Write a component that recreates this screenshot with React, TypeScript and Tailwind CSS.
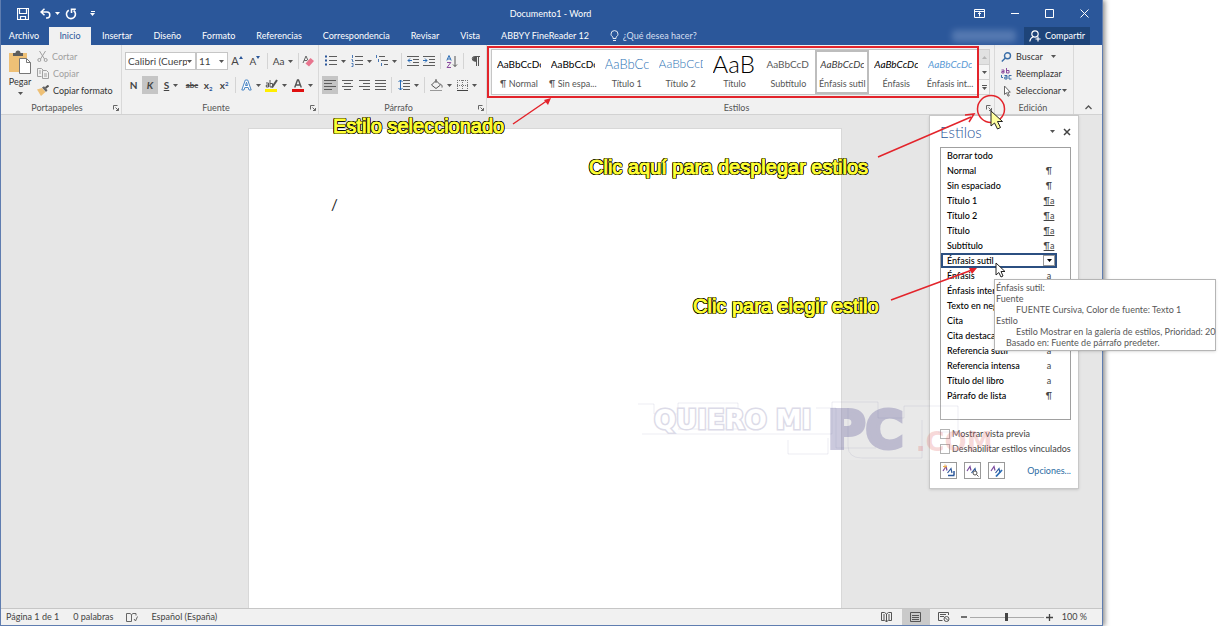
import { useState } from 'react';
import type { ReactNode } from 'react';
import clsx from 'clsx';

const TABS = ['Insertar', 'Diseño', 'Formato', 'Referencias', 'Correspondencia', 'Revisar', 'Vista', 'ABBYY FineReader 12'];

const GALLERY = [
  { name: '¶ Normal', sample: 'AaBbCcDc', look: 'text-[10px] text-black' },
  { name: '¶ Sin espa...', sample: 'AaBbCcDc', look: 'text-[10px] text-black' },
  { name: 'Título 1', sample: 'AaBbCc', look: 'text-[13px] font-light text-[#2e74b5]' },
  { name: 'Título 2', sample: 'AaBbCcD', look: 'text-[12px] font-light text-[#2e74b5]' },
  { name: 'Título', sample: 'AaB', look: 'text-[24px] font-light text-black' },
  { name: 'Subtítulo', sample: 'AaBbCcD', look: 'text-[10px] text-[#5a5a5a]' },
  { name: 'Énfasis sutil', sample: 'AaBbCcDc', look: 'text-[10px] italic text-[#404040]', active: true },
  { name: 'Énfasis', sample: 'AaBbCcDc', look: 'text-[10px] italic text-black' },
  { name: 'Énfasis int...', sample: 'AaBbCcDc', look: 'text-[10px] italic text-[#5b9bd5]' },
];

const STYLES = [
  ['Borrar todo', ''],
  ['Normal', '¶'],
  ['Sin espaciado', '¶'],
  ['Título 1', '¶a'],
  ['Título 2', '¶a'],
  ['Título', '¶a'],
  ['Subtítulo', '¶a'],
  ['Énfasis sutil', 'a'],
  ['Énfasis', 'a'],
  ['Énfasis inter', ''],
  ['Texto en neg', ''],
  ['Cita', ''],
  ['Cita destaca', ''],
  ['Referencia sutil', 'a'],
  ['Referencia intensa', 'a'],
  ['Título del libro', 'a'],
  ['Párrafo de lista', '¶'],
];

const Caret = ({ className = 'text-[#555]' }: { className?: string }) => (
  <svg width="5" height="3" viewBox="0 0 5 3" className={clsx('shrink-0', className)}>
    <path d="M0 0h5L2.5 3z" fill="currentColor" />
  </svg>
);

const Sep = () => <span className="mx-[3px] h-4 w-px shrink-0 bg-[#d4d4d4]" />;

function Tool({ label, children, className = 'w-4', active = false, caret = false }: {
  label: string;
  children: ReactNode;
  className?: string;
  active?: boolean;
  caret?: boolean;
}) {
  return (
    <button
      type="button"
      aria-label={label}
      className={clsx('flex h-[18px] shrink-0 items-center justify-center gap-1 text-[#444]', active && 'bg-[#c5c5c5]', className)}
    >
      {children}
      {caret && <Caret />}
    </button>
  );
}

// Horizontal rules given as [x1, x2, y]
const Lines = ({ rows, w = 12, h = 12, children }: { rows: number[][]; w?: number; h?: number; children?: ReactNode }) => (
  <svg width={w} height={h} viewBox={`0 0 ${w} ${h}`} fill="none" className="shrink-0">
    {rows.map(([a, b, y], i) => (
      <path key={i} d={`M${a} ${y + 0.5}H${b}`} stroke="#5c5c5c" />
    ))}
    {children}
  </svg>
);

const Launcher = ({ label }: { label: string }) => (
  <button type="button" aria-label={label} className="text-[#666]">
    <svg width="6" height="6" viewBox="0 0 6 6" fill="none" stroke="currentColor">
      <path d="M.5 4.5v-4h4M2.5 2.5l3 3M5.5 3v2.5H3" />
    </svg>
  </button>
);

function Group({ title, className, launcher = true, children }: { title: string; className: string; launcher?: boolean; children: ReactNode }) {
  return (
    <section className={clsx('flex flex-col border-r border-[#d9d9d9]', className)}>
      <div className="h-[57px]">{children}</div>
      <div className="flex h-3 items-center pr-[2px]">
        <h2 className="flex-1 text-center text-[#555]">{title}</h2>
        {launcher && <Launcher label={`Opciones de ${title}`} />}
      </div>
    </section>
  );
}

function TitleBar() {
  return (
    <header className="flex h-[27px] items-center bg-[#2b579a] pr-[13px] pl-4 text-white">
      <div className="flex w-[106px] items-center">
        <button type="button" aria-label="Guardar">
          <svg width="12" height="12" viewBox="0 0 12 12" fill="none" stroke="currentColor">
            <path d="M.5.5h11v11H.5zM2.5.5v5h7v-5M3.5 11V8.500h5V11" strokeWidth="1.2" />
          </svg>
        </button>
        <button type="button" aria-label="Deshacer" className="ml-[11px] flex items-center gap-1">
          <svg width="11" height="11" viewBox="0 0 11 11" fill="none" stroke="currentColor" strokeWidth="1.5">
            <path d="M1 4h6a2.800 3 0 0 1 0 6H6M4.500.7 1 4l3.500 3.300" />
          </svg>
          <Caret className="text-white" />
        </button>
        <button type="button" aria-label="Rehacer" className="ml-[5px]">
          <svg width="12" height="12" viewBox="0 0 12 12" fill="none" stroke="currentColor" strokeWidth="1.6">
            <path d="M3.800 2.200a4.500 4.500 0 1 0 4.800.3M6.500 5V1.300h4.300" />
          </svg>
        </button>
        <button type="button" aria-label="Personalizar barra" className="ml-[13px] flex flex-col items-center gap-px">
          <span className="h-px w-1 bg-white" />
          <Caret className="text-white" />
        </button>
      </div>
      <h1 className="flex-1 pl-1 text-center text-[9px]">Documento1 - Word</h1>
      <div className="flex items-center gap-[26px]">
        <button type="button" aria-label="Opciones de presentación">
          <svg width="11" height="9" viewBox="0 0 11 9" fill="none" stroke="currentColor">
            <path d="M.5.5h10v8H.5zM.5 2.500h10M5.500 7.500v-4M4 5l1.500-1.500L7 5" />
          </svg>
        </button>
        <button type="button" aria-label="Minimizar">
          <svg width="8" height="9" viewBox="0 0 8 9"><path d="M0 4.500h8" stroke="currentColor" /></svg>
        </button>
        <button type="button" aria-label="Maximizar">
          <svg width="9" height="9" viewBox="0 0 9 9"><path d="M.5.5h8v8h-8z" fill="none" stroke="currentColor" /></svg>
        </button>
        <button type="button" aria-label="Cerrar">
          <svg width="9" height="9" viewBox="0 0 9 9"><path d="M.5.5l8 8M8.500.5l-8 8" stroke="currentColor" /></svg>
        </button>
      </div>
    </header>
  );
}

function TabBar() {
  return (
    <nav className="flex h-[18px] bg-[#2b579a] pr-3 text-[9px] text-white">
      <button type="button" className="w-12 pr-[2px]">Archivo</button>
      <button type="button" className="w-[42px] bg-[#f1f1f1] text-[#2b579a]">Inicio</button>
      {TABS.map((tab) => (
        <button key={tab} type="button" className="pr-[10px] pl-[11px] whitespace-nowrap">{tab}</button>
      ))}
      <label className="flex flex-1 items-center gap-1 pl-[11px]">
        <svg width="9" height="12" viewBox="0 0 9 12" fill="none" stroke="#e6ecf5">
          <path d="M3 8.500V7.200C1.600 6.200 1 5.300 1 4.100a3.500 3.500 0 0 1 7 0c0 1.200-.6 2.100-2 3.100v1.300zM3 10.500h3" />
        </svg>
        <input aria-label="¿Qué desea hacer?" placeholder="¿Qué desea hacer?" className="w-24 bg-transparent outline-none placeholder:text-[#d5dff0]" />
      </label>
      <span aria-hidden="true" className="mr-2 h-3 w-16 self-center rounded bg-[#7f9bc8] opacity-50 blur-[3px]" />
      <button type="button" className="flex w-[66px] items-center justify-center gap-1 bg-[#1e4479]">
        <svg width="12" height="12" viewBox="0 0 12 12" fill="none" stroke="currentColor" strokeWidth="1.200">
          <circle cx="6" cy="4" r="3.200" />
          <path d="M.8 11.500c.3-2.500 1.700-4 3.500-4.700M9 6.500v5M6.500 9h5" />
        </svg>
        Compartir
      </button>
    </nav>
  );
}

function Clipboard() {
  return (
    <Group title="Portapapeles" className="w-[121px]">
      <div className="flex gap-1 pt-[3px] pl-[6px]">
        <button type="button" className="flex w-[26px] flex-col items-center pt-[2px] text-[#333]">
          <svg width="24" height="24" viewBox="0 0 24 24" className="shrink-0">
            <path d="M1 3h18v19H1z" fill="#eec076" />
            <path d="M5 3h2.500a2.500 2.500 0 0 1 5 0H15v3H5z" fill="#5d5d5d" />
            <path d="M11.500 8.500h7l4 4v11h-11z" fill="#fff" stroke="#777" />
            <path d="M18.500 8.500v4h4" fill="none" stroke="#777" />
          </svg>
          <span className="pt-[2px] pb-1">Pegar</span>
          <Caret />
        </button>
        <div className="flex flex-col text-[#333]">
          <button type="button" className="flex h-[17px] items-center gap-1 text-[#a0a0a0]">
            <svg width="11" height="11" viewBox="0 0 11 11" fill="none" stroke="currentColor">
              <path d="M2.500 0l5 8M8.500 0l-5 8" />
              <circle cx="2.300" cy="9" r="1.500" />
              <circle cx="8.700" cy="9" r="1.500" />
            </svg>
            Cortar
          </button>
          <button type="button" className="flex h-[17px] items-center gap-1 text-[#a0a0a0]">
            <svg width="12" height="11" viewBox="0 0 12 11" fill="none" stroke="currentColor">
              <path d="M4.500 8.500h-4v-8h4l2 2M5.500 2.500h4l2 2v6h-6zM2 3h2M2 5h2M7 6h3M7 8h3" />
            </svg>
            Copiar
          </button>
          <button type="button" className="flex h-[17px] items-center gap-1 whitespace-nowrap">
            <svg width="12" height="11" viewBox="0 0 12 11">
              <path d="M0 4.500 5 3l3.500 4L4 11z" fill="#eec076" />
              <path d="M5 2.500l2-1.300 3.500 4L9 7z" fill="#666" />
              <path d="M8.500 3 11.500.5" stroke="#555" strokeWidth="2" />
            </svg>
            Copiar formato
          </button>
        </div>
      </div>
    </Group>
  );
}

function FontGroup() {
  const [font, setFont] = useState('Calibri (Cuerpo)');
  const [size, setSize] = useState('11');
  const box = 'h-[18px] w-full appearance-none border border-[#c6c6c6] bg-white pl-[2px] text-[10px] leading-none text-[#444]';
  return (
    <Group title="Fuente" className="w-[197px]">
      <div className="flex flex-col gap-[6px] pt-[7px] pl-[3px]">
        <div className="flex items-center">
          <div className="relative w-[71px]">
            <select aria-label="Fuente" value={font} onChange={(e) => setFont(e.target.value)} className={clsx(box, 'pr-2')}>
              <option>Calibri (Cuerpo)</option>
              <option>Arial</option>
            </select>
            <span className="pointer-events-none absolute inset-y-0 right-1 flex items-center"><Caret /></span>
          </div>
          <div className="relative w-8">
            <select aria-label="Tamaño de fuente" value={size} onChange={(e) => setSize(e.target.value)} className={box}>
              <option>11</option>
              <option>12</option>
            </select>
            <span className="pointer-events-none absolute inset-y-0 right-1 flex items-center"><Caret /></span>
          </div>
          <Tool label="Aumentar tamaño" className="w-[18px] text-[11px]">
            <span>A</span>
            <svg width="4" height="10" viewBox="0 0 4 10" className="-ml-1"><path d="M0 3 2 0l2 3z" fill="#2b579a" /></svg>
          </Tool>
          <Tool label="Reducir tamaño" className="w-[18px] text-[10px]">
            <span>A</span>
            <svg width="4" height="10" viewBox="0 0 4 10" className="-ml-1"><path d="M0 0 2 3l2-3z" fill="#2b579a" /></svg>
          </Tool>
          <Sep />
          <Tool label="Cambiar mayúsculas" caret className="w-6 text-[10px]">Aa</Tool>
          <Sep />
          <Tool label="Borrar formato" className="w-3">
            <svg width="12" height="12" viewBox="0 0 12 12" fill="none">
              <path d="M1 8 4 1l2 4.500M2 5.500h3" stroke="#666" />
              <path d="M3.500 8.500 8.500 3 12 6l-5 5.500z" fill="#e8758e" />
            </svg>
          </Tool>
        </div>
        <div className="flex items-center">
          <Tool label="Negrita" className="w-[17px] text-[10px] font-bold">N</Tool>
          <Tool label="Cursiva" active className="w-4 text-[10px] font-bold italic">K</Tool>
          <Tool label="Subrayado" caret className="w-[26px] text-[10px] font-bold"><span className="underline">S</span></Tool>
          <Tool label="Tachado" className="w-4 text-[8px] font-bold"><span className="line-through">abc</span></Tool>
          <Tool label="Subíndice" className="w-4 text-[10px] font-bold"><span>x<sub className="text-[6px] text-[#2b579a]">2</sub></span></Tool>
          <Tool label="Superíndice" className="w-4 text-[10px] font-bold"><span>x<sup className="text-[6px] text-[#2b579a]">2</sup></span></Tool>
          <Sep />
          <Tool label="Efectos de texto" caret className="w-6">
            <svg width="11" height="12" viewBox="0 0 11 12" fill="#fff" stroke="#4a86c5">
              <path d="M.8 11 4.300 1h2.400l3.500 10H8L7.200 8.500H3.800L3 11zM4.500 6.500h2l-1-3.300z" />
            </svg>
          </Tool>
          <Tool label="Color de resaltado" caret className="w-[26px]">
            <svg width="13" height="13" viewBox="0 0 13 13">
              <path d="M0 10h12v3H0z" fill="#ffee00" />
              <path d="M7 8.500 12 1" stroke="#555" strokeWidth="2" />
              <path d="M1 4h2.500v4H1.300V6h2M5 1v7h2.500V4.500H5" fill="none" stroke="#555" />
            </svg>
          </Tool>
          <Tool label="Color de fuente" caret className="w-[26px]">
            <svg width="12" height="13" viewBox="0 0 12 13" fill="none">
              <path d="M0 10h12v3H0z" fill="#e01010" />
              <path d="M2.700 8.500 5.500 1h1l2.800 7.500M3.700 6h4.600" stroke="#555" strokeWidth="1.400" />
            </svg>
          </Tool>
        </div>
      </div>
    </Group>
  );
}

function ParagraphGroup() {
  return (
    <Group title="Párrafo" className="w-[168px]">
      <div className="flex flex-col gap-[6px] pt-[7px] pl-[3px]">
        <div className="flex items-center">
          <Tool label="Viñetas" caret className="w-[26px]">
            <Lines rows={[[4, 12, 1], [4, 12, 5], [4, 12, 9]]}><path d="M0 1.500h2M0 5.500h2M0 9.500h2" stroke="#2b579a" strokeWidth="2" /></Lines>
          </Tool>
          <Tool label="Numeración" caret className="w-[26px]">
            <Lines rows={[[4, 12, 1], [4, 12, 5], [4, 12, 9]]}><path d="M1.500 0v3M.5 4.500h1v2h1M.5 8.500h1.500v3H.5" stroke="#4a78b5" /></Lines>
          </Tool>
          <Tool label="Lista multinivel" caret className="w-6">
            <Lines rows={[[3, 9, 1], [5, 12, 5], [8, 12, 9]]}><path d="M.5 0v3M2.500 4v3M5.500 8v3" stroke="#4a78b5" /></Lines>
          </Tool>
          <Sep />
          <Tool label="Disminuir sangría">
            <Lines rows={[[0, 12, 1], [6, 12, 4], [6, 12, 7], [0, 12, 10]]}><path d="M5 5.500H1M3 3.500l-2 2 2 2" stroke="#2b6cb5" /></Lines>
          </Tool>
          <Tool label="Aumentar sangría">
            <Lines rows={[[0, 12, 1], [6, 12, 4], [6, 12, 7], [0, 12, 10]]}><path d="M0 5.500h4M2 3.500l2 2-2 2" stroke="#2b6cb5" /></Lines>
          </Tool>
          <Sep />
          <Tool label="Ordenar">
            <svg width="12" height="13" viewBox="0 0 12 13" fill="none">
              <path d="M.8 5.500 3 .5l2.200 5M1.500 4h3" stroke="#2b6cb5" />
              <path d="M1 7.500h3.800L1 12.500h4" stroke="#8a4a9e" />
              <path d="M9 1v10.500M7 9.500l2 2 2-2" stroke="#555" />
            </svg>
          </Tool>
          <Sep />
          <Tool label="Mostrar todo">
            <svg width="9" height="10" viewBox="0 0 9 10" fill="none" stroke="#555">
              <path d="M9 .5H3.500a2 2 0 0 0 0 4.500H5M5.500.5V10M7.500.5V10" /><path d="M3 1h2v4H3.500L2 3z" fill="#555" />
            </svg>
          </Tool>
        </div>
        <div className="flex items-center">
          <Tool label="Alinear a la izquierda" active><Lines rows={[[0, 12, 1], [0, 8, 4], [0, 12, 7], [0, 8, 10]]} /></Tool>
          <Tool label="Centrar" className="w-[18px]"><Lines w={11} rows={[[0, 11, 1], [2, 9, 4], [0, 11, 7], [2, 9, 10]]} /></Tool>
          <Tool label="Alinear a la derecha"><Lines w={11} rows={[[0, 11, 1], [4, 11, 4], [0, 11, 7], [4, 11, 10]]} /></Tool>
          <Tool label="Justificar"><Lines w={11} rows={[[0, 11, 1], [0, 11, 4], [0, 11, 7], [0, 11, 10]]} /></Tool>
          <Sep />
          <Tool label="Interlineado" caret className="w-[26px]">
            <Lines rows={[[5, 12, 1], [5, 12, 4], [5, 12, 7], [5, 12, 10]]}><path d="M2.500 1v10M.5 3l2-2 2 2M.5 9l2 2 2-2" stroke="#2b6cb5" /></Lines>
          </Tool>
          <Sep />
          <Tool label="Sombreado" caret className="w-[26px]">
            <svg width="13" height="12" viewBox="0 0 13 12" fill="none" stroke="#555">
              <path d="M1.500 6 6 1.500 10.500 6 6 9.500zM6 4V0M10.500 5c1.500 1 1.800 2 1.500 3.500" />
              <path d="M0 11.500h12" stroke="#999" />
            </svg>
          </Tool>
          <Tool label="Bordes" caret className="w-[26px]">
            <svg width="11" height="11" viewBox="0 0 11 11" fill="none" stroke="#777">
              <path d="M0 .5h11M.5 0v11M5.500 0v11M10.500 0v11M0 5.500h11" strokeDasharray="1 1" /><path d="M0 10.500h11" stroke="#444" />
            </svg>
          </Tool>
        </div>
      </div>
    </Group>
  );
}

function StylesGroup() {
  return (
    <Group title="Estilos" className="min-w-0 flex-1">
      <div className="flex pt-1 pl-1">
        <div className="relative flex h-[46px] flex-1 border border-[#c6c6c6] bg-white">
          {GALLERY.map((style) => (
            <button
              key={style.name}
              type="button"
              className={clsx(
                'flex min-w-0 flex-1 flex-col items-center overflow-hidden border-2 pt-px text-[#555]',
                style.active ? 'border-[#bdbdbd]' : 'border-transparent',
              )}
            >
              <span className={clsx('flex h-[22px] w-11 shrink-0 items-center overflow-hidden whitespace-nowrap', style.look)}>{style.sample}</span>
              <span className="pt-[3px] whitespace-nowrap">{style.name}</span>
            </button>
          ))}
          {/* highlight around the whole gallery */}
          <span className="pointer-events-none absolute -inset-y-1 -right-[2px] -left-[5px] z-10 border-2 border-[#e3242b]" />
        </div>
        <div className="mr-1 flex w-3 flex-col border border-[#d0d0d0] bg-[#f6f6f6]">
          <button type="button" aria-label="Fila anterior" className="flex flex-1 items-center justify-center bg-[#e1e1e1]"><Caret className="rotate-180 text-[#b5b5b5]" /></button>
          <button type="button" aria-label="Fila siguiente" className="flex flex-1 items-center justify-center border-y border-[#d0d0d0]"><Caret /></button>
          <button type="button" aria-label="Más estilos" className="flex flex-1 flex-col items-center justify-center gap-px">
            <span className="h-px w-[5px] bg-[#555]" />
            <Caret />
          </button>
        </div>
      </div>
    </Group>
  );
}

function EditGroup() {
  return (
    <Group title="Edición" className="w-[79px]" launcher={false}>
      <div className="flex flex-col items-start pt-[3px] pl-[6px] text-[#333]">
        <button type="button" className="flex h-[17px] items-center gap-1">
          <svg width="11" height="10" viewBox="0 0 11 10" fill="none" stroke="#3a6ea8" strokeWidth="1.400">
            <circle cx="6.500" cy="3.800" r="3" /><path d="M4.300 6 .8 9.500" />
          </svg>
          Buscar
          <span className="pl-1"><Caret /></span>
        </button>
        <button type="button" className="flex h-[17px] items-center gap-1">
          <svg width="11" height="12" viewBox="0 0 11 12" fill="none">
            <path d="M.5 2h2.500v3H.8V3.500H3M5.500 0v5H8V2.500H5.500" stroke="#8a4a9e" />
            <path d="M3.500 7.500H6v3.500H3.800V9H6M10.500 7.500H8V11h2.500M.5 7v2.500h1.500" stroke="#3a6ea8" />
          </svg>
          Reemplazar
        </button>
        <button type="button" className="flex h-[17px] items-center gap-1 whitespace-nowrap">
          <svg width="11" height="12" viewBox="0 0 11 12" fill="#fff" stroke="#666">
            <path d="M3.500 1v8.500l2-1.800 1.500 3.500 1.300-.6L6.800 7.200h2.500z" />
          </svg>
          <span className="flex items-center gap-px">Seleccionar <Caret /></span>
        </button>
      </div>
    </Group>
  );
}

const PaneIcon = ({ label, children }: { label: string; children?: ReactNode }) => (
  <button type="button" aria-label={label} className="flex size-[17px] items-center justify-center border border-[#999] bg-white">
    <svg width="13" height="13" viewBox="0 0 13 13" fill="none">
      <path d="M1 7 4 2.500l1 4" stroke="#7a4a9e" strokeWidth="1.200" />
      <path d="M5.500 9 9 4.500 10 9" stroke="#2b579a" strokeWidth="1.200" />
      {children}
    </svg>
  </button>
);

function StylesPane() {
  const [selected, setSelected] = useState('Énfasis sutil');
  const [preview, setPreview] = useState(false);
  const [linked, setLinked] = useState(false);
  const tick = 'size-[10px] shrink-0 appearance-none border border-[#a6a6a6] bg-white checked:bg-[#2b579a]';
  return (
    <aside className="absolute top-0 right-[23px] flex w-[150px] flex-col border border-[#c8c8c8] bg-white pr-[7px] pb-[9px] pl-[10px] shadow-sm">
      <div className="flex h-[31px] items-center gap-2">
        <h2 className="flex-1 text-[15px] font-light text-[#2b579a]">Estilos</h2>
        <button type="button" aria-label="Opciones del panel"><Caret /></button>
        <button type="button" aria-label="Cerrar panel">
          <svg width="8" height="8" viewBox="0 0 8 8"><path d="M1 1l6 6M7 1 1 7" stroke="#444" strokeWidth="1.500" /></svg>
        </button>
      </div>
      <ul className="h-[273px] border border-[#a0a0a0] pr-[13px] font-medium text-black">
        {STYLES.map(([name, mark]) => (
          <li key={name}>
            <button
              type="button"
              onClick={() => setSelected(name)}
              className={clsx('flex h-[15px] w-full items-center border-2 pl-1 text-left', selected === name ? 'border-[#2b4f81]' : 'border-transparent')}
            >
              <span className="flex-1 whitespace-nowrap">{name}</span>
              {selected === name ? (
                <span className="flex h-[11px] w-3 items-center justify-center border border-[#999]"><Caret className="text-black" /></span>
              ) : (
                <span className={clsx('w-3 text-center font-normal text-[#444]', mark === '¶a' && 'underline')}>{mark}</span>
              )}
            </button>
          </li>
        ))}
      </ul>
      <div className="flex flex-col pt-[6px] text-[#444]">
        <label className="flex h-[15px] items-center gap-[2px] whitespace-nowrap">
          <input type="checkbox" checked={preview} onChange={(e) => setPreview(e.target.checked)} className={tick} />
          Mostrar vista previa
        </label>
        <label className="flex h-[15px] items-center gap-[2px] whitespace-nowrap">
          <input type="checkbox" checked={linked} onChange={(e) => setLinked(e.target.checked)} className={tick} />
          Deshabilitar estilos vinculados
        </label>
      </div>
      <div className="flex items-center gap-[7px] pt-[6px]">
        <PaneIcon label="Nuevo estilo"><path d="M6 11.500h6.500M12 7v4" stroke="#2b579a" strokeWidth="1.500" /><path d="M1 2.500h4M3 .5v4" stroke="#eeb04a" /></PaneIcon>
        <PaneIcon label="Inspector de estilo"><circle cx="9" cy="9" r="2" stroke="#555" fill="#fff" /><path d="M10.500 10.500l2 2" stroke="#555" /></PaneIcon>
        <PaneIcon label="Administrar estilos"><path d="M6 12.500 12 6" stroke="#2b6cb5" strokeWidth="1.800" /></PaneIcon>
        <a href="#opciones" className="flex-1 text-right text-[#2b6ca3]">Opciones...</a>
      </div>
    </aside>
  );
}

function StatusBar() {
  const [zoom, setZoom] = useState(50);
  return (
    <footer className="flex h-[17px] items-center border-t border-[#c6c6c6] bg-[#f1f1f1] pr-[15px] pl-[5px] text-[#444]">
      <span>Página 1 de 1</span>
      <span className="ml-[14px]">0 palabras</span>
      <svg width="12" height="10" viewBox="0 0 12 10" fill="none" stroke="#666" className="mx-[13px]">
        <path d="M5.500 9.500h-5v-8h3.500l1.500 1 1.500-1h3v2M5.500 2.500v7M8 7l1.500 2 2-4.500" />
      </svg>
      <span className="flex-1">Español (España)</span>
      <button type="button" aria-label="Modo de lectura" className="flex h-4 w-[30px] items-center justify-center">
        <svg width="11" height="10" viewBox="0 0 11 10" fill="none" stroke="#555">
          <path d="M5.500 2v8M.5.5h3l2 1.500 2-1.500h3v8h-3l-2 1-2-1h-3zM2 3h2M2 5h2M7 3h2M7 5h2M7 7h2M2 7h2" />
        </svg>
      </button>
      <button type="button" aria-label="Diseño de impresión" className="flex h-4 w-7 items-center justify-center bg-[#cacaca]">
        <svg width="11" height="10" viewBox="0 0 11 10" fill="none" stroke="#555">
          <path d="M.5.5h10v9H.5zM2 3.500h7M2 5.500h7M2 7.500h7" />
        </svg>
      </button>
      <button type="button" aria-label="Diseño web" className="flex h-4 w-7 items-center justify-center">
        <svg width="12" height="10" viewBox="0 0 12 10" fill="none" stroke="#555">
          <path d="M10.500 3V.5H.5v8h4M2 2.500h6M2 4.500h4" /><circle cx="8.500" cy="7" r="2.500" /><path d="M7 5.500l3 3" />
        </svg>
      </button>
      <button type="button" aria-label="Alejar" className="flex w-3 items-center justify-center">
        <svg width="6" height="6" viewBox="0 0 6 6"><path d="M0 3h6" stroke="#444" strokeWidth="1.500" /></svg>
      </button>
      <input
        type="range"
        aria-label="Zoom"
        value={zoom}
        onChange={(e) => setZoom(Number(e.target.value))}
        className="h-3 w-[74px] appearance-none bg-transparent [&::-webkit-slider-runnable-track]:h-px [&::-webkit-slider-runnable-track]:bg-[#aaa] [&::-webkit-slider-thumb]:-mt-1 [&::-webkit-slider-thumb]:h-2 [&::-webkit-slider-thumb]:w-[3px] [&::-webkit-slider-thumb]:appearance-none [&::-webkit-slider-thumb]:bg-[#444]"
      />
      <button type="button" aria-label="Acercar" className="flex w-3 items-center justify-center">
        <svg width="7" height="7" viewBox="0 0 7 7"><path d="M0 3.500h7M3.500 0v7" stroke="#444" strokeWidth="1.300" /></svg>
      </button>
      <span className="ml-[6px]">100 %</span>
    </footer>
  );
}

const NOTE =
  "absolute whitespace-nowrap font-['Liberation_Sans',sans-serif] text-[20px] leading-6 text-[#ffff33] [-webkit-text-stroke:1px_#ffff33] [text-shadow:1px_0_#000,-1px_0_#000,0_1px_#000,0_-1px_#000,1px_1px_#000,-1px_-1px_#000,1px_-1px_#000,-1px_1px_#000,1px_0_#000,-1px_0_#000,0_1px_#000,0_-1px_#000,0_0_1px_#000,0_0_1px_#000]";

function Annotations() {
  return (
    <div className="pointer-events-none absolute inset-0 z-20">
      <p className={clsx(NOTE, 'top-[114px] left-[333px]')}>Estilo seleccionado</p>
      <p className={clsx(NOTE, 'top-[155px] left-[589px]')}>Clic aquí para desplegar estilos</p>
      <p className={clsx(NOTE, 'top-[294px] left-[693px]')}>Clic para elegir estilo</p>
      <div className="absolute top-[279px] left-[994px] w-[222px] border border-[#b5b5b5] bg-white px-px py-[2px] leading-[11px] whitespace-nowrap text-[#575757] shadow-sm">
        <p>Énfasis sutil:</p>
        <p>Fuente</p>
        <p className="pl-5">FUENTE Cursiva, Color de fuente: Texto 1</p>
        <p>Estilo</p>
        <p className="pl-5">Estilo Mostrar en la galería de estilos, Prioridad: 20</p>
        <p className="pl-[10px]">Basado en: Fuente de párrafo predeter.</p>
      </div>
      <svg width="1103" height="500" viewBox="0 0 1103 500" fill="none" className="absolute top-0 left-0">
        <g stroke="#e3242b" strokeWidth="1.500">
          <path d="M513 124 548 100M878 157 971 117M891 300 972 270" />
          <circle cx="991" cy="109" r="13.500" />
          <path d="M965 115l9-1-5 8" />
        </g>
        <path d="M551 98l-3 7-4-5zM977 268l-5 6-3-6z" fill="#e3242b" />
        <path d="M991 111v15l3.500-3 3 6 3-1.500-3-6h5z" fill="#ffffa0" stroke="#222" />
        <path d="M996 263v12l2.800-2.500 2.200 4.500 2-1-2-4.500h4z" fill="#fff" stroke="#222" />
      </svg>
    </div>
  );
}

function Watermark() {
  return (
    <div className="pointer-events-none absolute top-[400px] left-[638px] z-10 flex h-[60px] w-[380px] items-center pl-4 font-['DejaVu_Sans',sans-serif] font-bold">
      <svg width="322" height="60" viewBox="0 0 322 60" fill="none" className="absolute top-0 left-0">
        <path d="M0 0h322v60H0z" fill="#fff" opacity=".15" />
        <g stroke="#8888aa" opacity=".14">
          <path d="M0 4h16v10h24V3h60v26H40M4 34h190V2h46v16h26V6h54v26h-20M150 40v14h40V38M178 8h20v40h40M210 8v38q0 12 14 12h60V20" />
        </g>
      </svg>
      <span className="relative pb-5 text-[26px] leading-none whitespace-nowrap text-white [-webkit-text-stroke:3px_#dcdbe8] [paint-order:stroke_fill]">QUIERO MI</span>
      <span className="relative ml-4 text-[52px] leading-none text-[#6c68a0] opacity-35 [-webkit-text-stroke:4px_#6c68a0]">PC</span>
      <span className="relative pt-6 pl-3 text-[26px] leading-none text-[#e06a6a]/25">.COM</span>
    </div>
  );
}

export default function App() {
  return (
    <div className="relative h-screen overflow-hidden bg-white pr-[118px] font-['Lato','Open_Sans',sans-serif] text-[9px] leading-3">
      <div className="flex h-full flex-col border-x border-b border-[#5f7db0] shadow-[2px_0_5px_rgba(0,0,0,0.45)]">
        <TitleBar />
        <TabBar />
        <div className="flex h-[70px] border-b border-[#d2d2d2] bg-[#f1f1f1]">
          <Clipboard />
          <FontGroup />
          <ParagraphGroup />
          <StylesGroup />
          <EditGroup />
          <button type="button" aria-label="Contraer la cinta" className="flex w-7 items-end justify-center pb-1">
            <svg width="7" height="5" viewBox="0 0 7 5" fill="none"><path d="M.5 4 3.500 1l3 3" stroke="#555" strokeWidth="1.300" /></svg>
          </button>
        </div>
        <main className="relative flex min-h-0 flex-1 justify-center bg-[#e6e6e6] pt-[13px] pr-[13px]">
          <article className="w-[594px] border border-b-0 border-[#d8d8d8] bg-white px-[82px] pt-[67px] text-[15px] leading-4 text-[#222]">/</article>
          <StylesPane />
        </main>
        <StatusBar />
      </div>
      <Watermark />
      <Annotations />
    </div>
  );
}
